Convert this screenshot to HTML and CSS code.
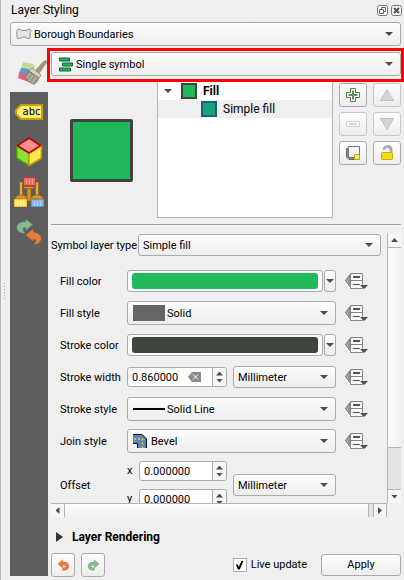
FILE: index.html
```html
<!DOCTYPE html>
<html lang="en">
<head>
<meta charset="utf-8">
<title>Layer Styling</title>
<meta name="viewport" content="width=device-width, initial-scale=1">
<link rel="stylesheet" href="styles.css">
</head>
<body>
<svg class="defs" aria-hidden="true">
  <symbol id="override" viewBox="0 0 24 18">
    <path d="M5 2.500 0.500 8.500 5 14.500z" fill="#9a9d9f" stroke="#77797b"/>
    <path d="M5.500 1.500h12v15h-12z" fill="#fafafa" stroke="#858683"/>
    <path d="M5 8.500h13" stroke="#858683"/>
    <path d="M8 5h7" stroke="#555" stroke-width="2"/>
    <path d="M8 12.500h7" stroke="#555"/>
    <path d="M15 13h8l-4 4z" fill="#4d4d4d"/>
  </symbol>
  <symbol id="undo" viewBox="0 0 16 16">
    <path d="M1 6 7 1v3c5-1 8 2 7.500 5.500C14 13 11 14 7 14v-3c3 0 4-1 4-2 0-1-2-1.500-4-1v3z" fill="#e67c3c" stroke="#d56b30" stroke-width=".6"/>
  </symbol>
  <symbol id="redo" viewBox="0 0 16 16">
    <path d="M15 6 9 1v3C4 3 1 6 1.500 9.500 2 13 5 14 9 14v-3c-3 0-4-1-4-2 0-1 2-1.500 4-1v3z" fill="#87ba91" stroke="#6da77b" stroke-width=".6"/>
  </symbol>
</svg>
<div class="dock">
  <header class="titlebar">
    <h1>Layer Styling</h1>
    <button class="title-button" aria-label="Float panel"><svg viewBox="0 0 11 11"><rect x=".5" y=".5" width="10" height="10" rx="2" fill="#f8f8f8" stroke="#777"/><path d="M4.500 4V2.500h4v4H7M2.500 4.500h4v4h-4z" fill="none" stroke="#666"/></svg></button>
    <button class="title-button" aria-label="Close panel"><svg viewBox="0 0 11 11"><rect x=".5" y=".5" width="10" height="10" rx="2" fill="#f8f8f8" stroke="#777"/><path d="m3 3 5 5m0-5-5 5" stroke="#555" stroke-width="2"/></svg></button>
  </header>

  <div class="combo tall layer">
    <svg class="layer-icon" viewBox="0 0 16 12"><path d="M1.500 1.500c2-1 3 1 6.500 1s4.500-2 6.500-1c1.500 1-.5 2.500-.5 4.500s1 4-1 4.500c-2 .3-3-1.500-5-1.500s-4 2-6 1.500C.5 10 .5 3 1.500 1.500z" fill="#e4e4e4" stroke="#8c8c8c"/></svg>
    <select aria-label="Layer"><option>Borough Boundaries</option></select>
  </div>

  <div class="columns">
    <nav class="tabs">
      <button class="tab current" aria-label="Symbology">
        <svg viewBox="0 0 31 26" width="31" height="26">
          <path d="M6 2c3 1 8 0 12 4l-2 7L4 8z" fill="#c6d89a"/>
          <path d="M4 8c4 0 8 1 12 3l-2 6-12-4z" fill="#5b9bd0"/>
          <path d="M2 13c4 0 8 0 12 3l-1 6-4-1-8-3z" fill="#e06478"/>
          <path d="m19 10 7-8c1-1 4-2 4-.5 0 1-1 2-2 3l-6 9z" fill="#a39878" stroke="#8d8468" stroke-width=".7"/>
          <path d="m15 8 9 7-2 3-10-7z" fill="#d8d2b4" stroke="#8a8672" stroke-width=".8"/>
          <path d="m12 11 10 7c-1 3-3 5-5 6.500L11 21.500 8 17c2-1 3-3 4-6z" fill="#9b9a88" stroke="#807c6a" stroke-width=".7"/>
          <path d="m13 13-3 5m6-3-4 6m7-4-4 6" stroke="#d0ccba" stroke-width=".8"/>
        </svg>
      </button>
      <div class="rail">
        <button class="tab" aria-label="Labels"><span class="tag"><svg viewBox="0 0 28 16" width="28" height="16"><path d="M6 1h21v14H6L1 10V6z" fill="#fff07c" stroke="#c4a000" stroke-width="2"/></svg><span>abc</span></span></button>
        <button class="tab" aria-label="3D view">
          <svg viewBox="0 0 28 30" width="28" height="30">
            <path d="M1.500 9 14 16v12.500L2 21.500z" fill="#8ae234" stroke="#4e9a06" stroke-width="1.500"/>
            <path d="M26.500 9 14 16v12.500L26 21.500z" fill="#fce94f" stroke="#c4a000" stroke-width="1.500"/>
            <path d="M14 1 25.500 8.500 14 16 2.500 8.500z" fill="#f78f8f" stroke="#b80000" stroke-width="1.500"/>
          </svg>
        </button>
        <button class="tab" aria-label="Diagrams">
          <svg viewBox="0 0 30 30" width="30" height="30">
            <path d="M13 9h4v15h-4z" fill="#d09030" stroke="#8f5902" stroke-width=".6"/>
            <path d="M5.500 5h3v14h-3zM21.500 5h3v14h-3z" fill="#e9a64a" stroke="#8f5902" stroke-width=".6"/>
            <path d="M10 9.500h10v2H10zM1 22v-2l4-2h4l4 2v2zM17 22v-2l4-2h4l4 2v2z" fill="#d9942e" stroke="#8f5902" stroke-width=".6"/>
            <path d="M9.500.500h12v8h-12z" fill="#ef6a6a" stroke="#cc3333"/>
            <path d="M.5 22.500h12v7H.5z" fill="#ffe76b" stroke="#e8c93c"/>
            <path d="M17.500 22.500h12v7h-12z" fill="#8db7e6" stroke="#6696cf"/>
            <path d="M12.500 2v5m3-5v5m3-5v5M3.500 24v5m3-5v5m3-5v5m11-5v5m3-5v5m3-5v5" stroke="#fff" stroke-opacity=".35"/>
          </svg>
        </button>
        <button class="tab" aria-label="History">
          <svg viewBox="0 0 26 26" width="26" height="26">
            <path d="M1 9C1 4 5 3 10 3V.500l6.500 5L10 11V8C6 8 6 11 9 14c-5 0-8-2-8-5z" fill="#87ba91" stroke="#6da77b" stroke-width=".6"/>
            <path d="m10 16 7-5.500v3c5 0 8 3 8 6s-3 6-7 5.500c3-2 3-5-1-5V22z" fill="#e67c3c" stroke="#d56b30" stroke-width=".6"/>
          </svg>
        </button>
      </div>
    </nav>

    <main class="panel">
      <div class="highlight">
        <div class="combo tall renderer">
          <svg width="14" height="15" viewBox="0 0 14 15"><path d="M.5 1h10v3H.5zM3.500 6h10v3h-10zM.5 11h11v3H.5z" fill="#1fb85a" stroke="#12613a"/></svg>
          <select aria-label="Renderer"><option>Single symbol</option></select>
        </div>
      </div>

      <section class="symbol">
        <div class="preview"><div class="preview-swatch"></div></div>
        <ul class="tree">
          <li class="root"><i class="arrow"></i><i class="swatch"></i><b>Fill</b></li>
          <li class="child"><i class="swatch teal"></i>Simple fill</li>
        </ul>
        <div class="tools">
          <button aria-label="Add layer"><svg viewBox="0 0 14 14"><path d="M4.500.500h5v4h4v5h-4v4h-5v-4h-4v-5h4z" fill="#fff" stroke="#4c8450"/><path d="M7 2.500v9M2.500 7h9" stroke="#5c965f" stroke-width="2"/></svg></button>
          <button disabled aria-label="Move up"><svg viewBox="0 0 14 14"><path d="M7 1.500 13.500 12.500H.500z" fill="#d4d5d6" stroke="#bfc1c3"/></svg></button>
          <button disabled aria-label="Remove layer"><svg viewBox="0 0 14 14"><path d="M.5 4.500h13v5H.500z" fill="#faf9f9" stroke="#d8d0d0"/><path d="M3 7h8" stroke="#ddd6d4" stroke-width="2"/></svg></button>
          <button disabled aria-label="Move down"><svg viewBox="0 0 14 14"><path d="M.5 1.500h13L7 12.500z" fill="#d4d5d6" stroke="#bfc1c3"/></svg></button>
          <button aria-label="Duplicate layer"><svg viewBox="0 0 14 14"><path d="M.5 2.500h2v-2h11v10h-2v3H3L.500 11z" fill="#888a85" stroke="#666"/><path d="M2.500.500h11v11h-11z" fill="#f3f3f3" stroke="#777"/><path d="M8.500 8.500h5v5h-5z" fill="#fbe88a" stroke="#c4a000"/></svg></button>
          <button aria-label="Lock color"><svg viewBox="0 0 14 16" class="lock"><path d="M4 4.500C5 0 12 0 11 7" fill="none" stroke="#888" stroke-width="2.500"/><path d="M4 4.500C5 0 12 0 11 7" fill="none" stroke="#ccc" stroke-width="1"/><rect x="1.500" y="7.500" width="11" height="7" rx="1" fill="#f2dc1e" stroke="#c9a800"/></svg></button>
        </div>
      </section>

      <hr>

      <div class="scroller">
        <form class="form" id="props">
          <div class="row type">
            <label for="type">Symbol layer type</label>
            <div class="combo"><select id="type"><option>Simple fill</option></select></div>
          </div>
          <div class="row">
            <label for="fill">Fill color</label>
            <div class="color"><button type="button" id="fill" class="well"><span class="green"></span></button><button type="button" class="more" aria-label="Fill color options"></button></div>
            <button type="button" class="override" aria-label="Override fill color"><svg><use href="#override"/></svg></button>
          </div>
          <div class="row">
            <label for="fstyle">Fill style</label>
            <div class="combo tall brush"><i class="solid"></i><select id="fstyle"><option>Solid</option></select></div>
            <button type="button" class="override" aria-label="Override fill style"><svg><use href="#override"/></svg></button>
          </div>
          <div class="row">
            <label for="stroke">Stroke color</label>
            <div class="color"><button type="button" id="stroke" class="well"><span class="dark"></span></button><button type="button" class="more" aria-label="Stroke color options"></button></div>
            <button type="button" class="override" aria-label="Override stroke color"><svg><use href="#override"/></svg></button>
          </div>
          <div class="row">
            <label for="width">Stroke width</label>
            <div class="pair">
              <div class="spin"><input id="width" value="0.860000"><button type="button" class="clear" aria-label="Clear"><svg width="13" height="10" viewBox="0 0 13 10"><path d="M4 0h9v10H4L0 5z" fill="#8c8c8c"/><path d="m5 2.500 5 5m0-5-5 5" stroke="#fff"/></svg></button><span class="steps"><button type="button" aria-label="Increase"></button><button type="button" aria-label="Decrease"></button></span></div>
              <div class="combo unit"><select aria-label="Stroke width unit"><option>Millimeter</option></select></div>
            </div>
            <button type="button" class="override" aria-label="Override stroke width"><svg><use href="#override"/></svg></button>
          </div>
          <div class="row">
            <label for="sstyle">Stroke style</label>
            <div class="combo tall brush"><i class="line"></i><select id="sstyle"><option>Solid Line</option></select></div>
            <button type="button" class="override" aria-label="Override stroke style"><svg><use href="#override"/></svg></button>
          </div>
          <div class="row">
            <label for="join">Join style</label>
            <div class="combo tall join">
              <svg width="14" height="14" viewBox="0 0 14 14"><path d="M0 0h9l5 5v9H5V9H0z" fill="#5b84b8"/><path d="M0 .500h9l4.500 4.500v9M0 9.500h4.500V14" fill="none" stroke="#111"/><path d="M1 5h8.500v9" fill="none" stroke="#f0d020" stroke-width="1.500" stroke-dasharray="2 2"/></svg>
              <select id="join"><option>Bevel</option></select>
            </div>
            <button type="button" class="override" aria-label="Override join style"><svg><use href="#override"/></svg></button>
          </div>
          <div class="row offset">
            <span class="label">Offset</span>
            <div class="pair">
              <div class="axes">
                <div class="axis"><label for="ox">x</label><div class="spin"><input id="ox" value="0.000000"><span class="steps"><button type="button" aria-label="Increase x"></button><button type="button" aria-label="Decrease x"></button></span></div></div>
                <div class="axis"><label for="oy">y</label><div class="spin"><input id="oy" value="0.000000"><span class="steps"><button type="button" aria-label="Increase y"></button><button type="button" aria-label="Decrease y"></button></span></div></div>
              </div>
              <div class="combo unit"><select aria-label="Offset unit"><option>Millimeter</option></select></div>
            </div>
          </div>
        </form>
        <div class="vbar"><button class="up" aria-label="Scroll up"></button><div class="thumb"></div><div class="track"></div><button class="down" aria-label="Scroll down"></button></div>
        <div class="hbar"><button class="left" aria-label="Scroll left"></button><div class="thumb"></div><div class="track"></div><button class="right" aria-label="Scroll right"></button></div>
      </div>

      <button class="rendering"><i></i>Layer Rendering</button>

      <footer class="footer">
        <button class="square" aria-label="Undo"><svg><use href="#undo"/></svg></button>
        <button class="square" aria-label="Redo"><svg><use href="#redo"/></svg></button>
        <label class="live"><input type="checkbox" checked>Live update</label>
        <button class="apply">Apply</button>
      </footer>
    </main>
  </div>
</div>
</body>
</html>
```
FILE: styles.css
```css
* { box-sizing: border-box; }

body {
  margin: 0;
  background: #efefef;
  color: #000;
  font: 11px/16px Roboto, "Noto Sans", sans-serif;
}

button, select, input { font: inherit; color: inherit; margin: 0; padding: 0; }
button { background: none; border: 0; display: block; }
ul, h1 { margin: 0; padding: 0; font: inherit; list-style: none; }
svg { display: block; flex: none; }
.defs { display: none; }

.dock {
  position: relative;
  display: flex;
  flex-direction: column;
  height: 100vh;
  min-height: 480px;
  padding: 0 3px 0 9px;
  border-left: 1px solid #b4b4b4;
}

/* splitter grip */
.dock::before {
  content: "";
  position: absolute;
  left: 3px;
  top: 283px;
  width: 1px;
  height: 16px;
  background: repeating-linear-gradient(#aaa 0 1px, transparent 1px 3px);
}

.titlebar { display: flex; align-items: center; gap: 3px; height: 22px; margin-right: -1px; padding-bottom: 2px; }
.titlebar h1 { flex: 1; padding-left: 1px; font-size: 12px; }
.title-button svg { width: 11px; height: 11px; }

/* combo boxes */
.combo {
  display: flex;
  align-items: center;
  flex: 1;
  min-width: 0;
  height: 22px;
  padding: 0 7px 0 4px;
  border: 1px solid #ababab;
  border-radius: 3px;
  background: linear-gradient(#fdfdfd, #ededed);
}
.combo.tall { height: 24px; }
.combo::after {
  content: "";
  flex: none;
  width: 8px;
  height: 4px;
  background: #4d4d4d;
  clip-path: polygon(0 0, 100% 0, 50% 100%);
}
.combo select { appearance: none; flex: 1; min-width: 0; height: 18px; padding-top: 2px; border: 0; background: none; outline: 0; }
.layer { flex: none; padding-left: 5px; gap: 2px; }
.layer-icon { width: 16px; height: 12px; }
.renderer { padding-left: 7px; gap: 3px; }

.columns { display: flex; flex: 1; min-height: 0; margin-top: 2px; }

/* side tabs */
.tabs { display: flex; flex-direction: column; flex: none; width: 38px; padding-bottom: 4px; }
.tab { display: grid; place-items: center; width: 100%; height: 30px; }
.tab.current { height: 44px; padding: 6px 0 0 6px; }
.rail { flex: 1; display: flex; flex-direction: column; gap: 10px; padding-top: 5px; background: #5e5e5e; }
.tag { display: grid; align-items: center; font: 10px/14px "DejaVu Sans", sans-serif; }
.tag > * { grid-area: 1 / 1; }
.tag span { padding-left: 5px; }

.panel { display: flex; flex-direction: column; flex: 1; min-width: 0; padding: 0 0 3px 3px; }

.highlight { flex: none; display: flex; margin: 0 -3px 0 -4px; padding: 1px 0 3px 1px; border: 3px solid #f00; }

/* symbol preview, layer tree and tools */
.symbol { display: flex; flex: none; height: 136px; }
.preview { display: grid; place-items: center; width: 106px; padding-right: 5px; }
.preview-swatch { width: 63px; height: 63px; border: 3px solid #40443e; border-radius: 2px; background: #1fb85a; }
.tree { flex: 1; border: 1px solid #b4b4b4; border-top: 0; background: #fff; font-size: 12px; }
.tree li { display: flex; align-items: center; height: 18px; }
.root { padding-left: 6px; }
.child { padding-left: 43px; background: #efefef; }
.tree .arrow { width: 8px; height: 4px; margin-right: 9px; background: #4d4d4d; clip-path: polygon(0 0, 100% 0, 50% 100%); }
.swatch { width: 16px; height: 16px; margin-right: 6px; border: 2px solid #40443e; background: #1fb85a; }
.swatch.teal { border-color: #235c7c; background: #15a47c; }
.tools { display: grid; grid-template-columns: 28px 28px; grid-auto-rows: 24px; gap: 5px 6px; padding: 1px 0 0 6px; }
.tools button, .square, .apply { display: grid; place-items: center; border: 1px solid #ababab; border-radius: 3px; background: linear-gradient(#fdfdfd, #ededed); }
.tools button:disabled { border-color: #c8c8c8; }
.tools svg { width: 14px; height: 14px; }
.tools .lock { height: 16px; }

hr { width: 100%; height: 2px; margin: 6px 0 7px; border: 0; border-top: 1px solid #9c9c9c; background: #fafafa; flex: none; }

/* property form */
.scroller { display: grid; flex: 1; min-height: 0; grid-template: minmax(0, 1fr) 14px / minmax(0, 1fr) 14px; }
.form { overflow: hidden; padding-left: 9px; }
.row { display: grid; grid-template-columns: 67px minmax(0, 1fr) 24px; align-items: center; height: 32px; padding-right: 18px; }
.row > :nth-child(2) { margin-right: 9px; }
.row.type { grid-template-columns: 87px minmax(0, 1fr); height: 24px; margin: 0 0 8px -9px; padding-right: 6px; }
.row.type > .combo { margin-right: 0; }
.row > label, .row > .label { padding-top: 2px; white-space: nowrap; }
.row.offset { height: 56px; }
.override svg { width: 24px; height: 18px; }

.color { display: flex; gap: 1px; height: 22px; }
.well { flex: 1; padding: 2px 4px; border: 1px solid #ababab; border-radius: 3px; background: #fafafa; }
.well span { display: block; height: 16px; border-radius: 3px; }
.green { background: #1fb85a; }
.dark { background: #40443e; }
.more { display: grid; place-items: center; width: 12px; border: 1px solid #ababab; border-radius: 3px; background: linear-gradient(#fdfdfd, #ededed); }
.more::after { content: ""; width: 8px; height: 4px; background: #4d4d4d; clip-path: polygon(0 0, 100% 0, 50% 100%); }

.brush { padding-left: 5px; }
.solid { width: 32px; height: 16px; margin-right: 2px; background: #666; }
.line { width: 32px; height: 2px; margin-right: 2px; background: #000; }
.join { padding-left: 5px; gap: 4px; }

.pair { display: flex; align-items: center; gap: 6px; }
.unit { flex: 0 0 103px; }
.spin { display: flex; align-items: center; flex: 1; min-width: 0; height: 20px; border: 1px solid #ababab; border-radius: 3px; background: #fff; overflow: hidden; }
.spin input { flex: 1; width: 0; min-width: 0; height: 18px; padding-left: 4px; border: 0; outline: 0; background: none; }
.clear { margin-right: 11px; }
.steps { display: grid; flex: none; width: 14px; height: 100%; border-left: 1px solid #ababab; background: #f6f6f6; }
.steps button { display: grid; place-items: end center; padding-bottom: 1px; }
.steps button + button { place-items: start center; padding: 2px 0 0; }
.steps button::after { content: ""; width: 7px; height: 4px; background: #4d4d4d; clip-path: polygon(50% 0, 100% 100%, 0 100%); }
.steps button + button::after { clip-path: polygon(0 0, 100% 0, 50% 100%); }
.axes { flex: 1; min-width: 0; }
.axis { display: flex; align-items: center; height: 28px; }
.axis label { width: 12px; }

/* scroll bars */
.vbar, .hbar { display: flex; background: #e3e3e3; }
.vbar { flex-direction: column; border-left: 1px solid #b4b4b4; }
.hbar { border-top: 1px solid #b4b4b4; border-right: 1px solid #b4b4b4; }
.vbar button, .hbar button { display: grid; place-items: center; flex: none; background: #f6f6f6; }
.vbar button { height: 14px; }
.hbar button { width: 13px; }
.vbar .down { border-top: 1px solid #b4b4b4; }
.hbar .right { border-left: 1px solid #b4b4b4; }
.vbar button::after { content: ""; width: 7px; height: 4px; background: #4d4d4d; }
.hbar button::after { content: ""; width: 4px; height: 7px; background: #4d4d4d; }
.vbar .up::after { clip-path: polygon(50% 0, 100% 100%, 0 100%); }
.vbar .down::after { clip-path: polygon(0 0, 100% 0, 50% 100%); }
.hbar .left::after { clip-path: polygon(0 50%, 100% 0, 100% 100%); }
.hbar .right::after { clip-path: polygon(0 0, 100% 50%, 0 100%); }
.vbar .thumb { flex: 201; border: solid #b4b4b4; border-width: 1px 0; background: linear-gradient(90deg, #fdfdfd, #f0f0f0); }
.vbar .track { flex: 41; }
.hbar .thumb { flex: 304; border: solid #b4b4b4; border-width: 0 1px; background: linear-gradient(#fdfdfd, #f0f0f0); }
.hbar .track { flex: 4; }

.rendering { display: flex; align-items: center; gap: 9px; margin: 10px 0 6px 5px; height: 20px; font-size: 12px; font-weight: bold; }
.rendering i { width: 7px; height: 10px; background: #333; clip-path: polygon(0 0, 100% 50%, 0 100%); }

.footer { display: flex; align-items: center; gap: 6px; }
.square { width: 24px; height: 24px; }
.square svg { width: 13px; height: 13px; }
.live { display: flex; align-items: center; gap: 4px; margin: 0 8px 0 auto; }
.live input {
  appearance: none;
  display: grid;
  place-items: center;
  width: 14px;
  height: 14px;
  border: 1px solid #ababab;
  background: #fff;
}
.live input:checked::after {
  content: "";
  width: 8px;
  height: 9px;
  background: #000;
  clip-path: polygon(0 45%, 25% 45%, 38% 70%, 75% 0, 100% 0, 50% 100%, 28% 100%);
}
.apply { width: 80px; height: 22px; }
```
